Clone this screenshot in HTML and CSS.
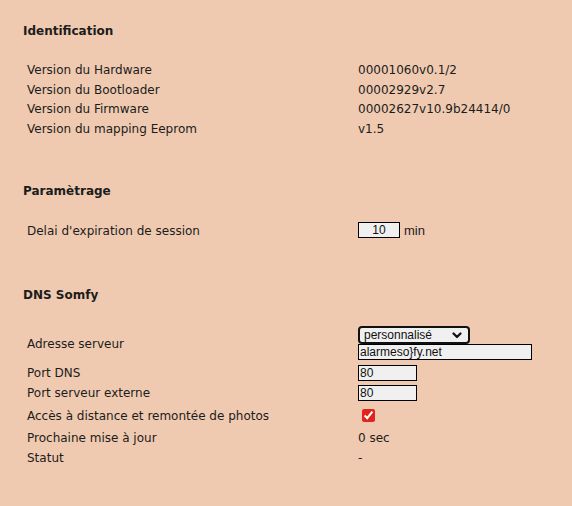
FILE: index.html
```html
<!DOCTYPE html>
<html lang="fr">
<head>
<meta charset="utf-8">
<title>Configuration</title>
<link rel="stylesheet" href="styles.css">
</head>
<body>
<main class="page">
  <section class="section">
    <h2 class="section-title">Identification</h2>
    <div class="rows rows-id">
      <div class="row row-text"><span class="label">Version du Hardware</span><span class="value">00001060v0.1/2</span></div>
      <div class="row row-text"><span class="label">Version du Bootloader</span><span class="value">00002929v2.7</span></div>
      <div class="row row-text"><span class="label">Version du Firmware</span><span class="value">00002627v10.9b24414/0</span></div>
      <div class="row row-text"><span class="label">Version du mapping Eeprom</span><span class="value">v1.5</span></div>
    </div>
  </section>

  <section class="section section-param">
    <h2 class="section-title">Paramètrage</h2>
    <div class="rows rows-param">
      <div class="row row-field"><span class="label">Delai d'expiration de session</span><span class="value"><input class="field field-timeout" type="text" value="10"><span class="unit">min</span></span></div>
    </div>
  </section>

  <section class="section section-dns">
    <h2 class="section-title">DNS Somfy</h2>
    <div class="rows rows-dns">
      <div class="row row-server"><span class="label">Adresse serveur</span>
        <span class="value value-stack">
          <span class="select-wrap">
            <select class="select"><option>personnalisé</option></select>
            <svg class="chevron" width="10" height="7" viewBox="0 0 10 7"><polyline points="1.5,1.5 5,5 8.5,1.5" fill="none" stroke="#111" stroke-width="2.2" stroke-linecap="round" stroke-linejoin="round"/></svg>
          </span>
          <input class="field field-host" type="text" value="alarmeso}fy.net">
        </span>
      </div>
      <div class="row row-field row-port"><span class="label">Port DNS</span><span class="value"><input class="field field-port" type="text" value="80"></span></div>
      <div class="row row-field row-port"><span class="label">Port serveur externe</span><span class="value"><input class="field field-port" type="text" value="80"></span></div>
      <div class="row row-check"><span class="label">Accès à distance et remontée de photos</span><span class="value"><input class="check" type="checkbox" checked></span></div>
      <div class="row row-text row-next"><span class="label">Prochaine mise à jour</span><span class="value">0 sec</span></div>
      <div class="row row-text row-status"><span class="label">Statut</span><span class="value">-</span></div>
    </div>
  </section>
</main>
</body>
</html>
```

FILE: styles.css
```css
html, body {
  margin: 0;
  padding: 0;
}
body {
  width: 572px;
  height: 506px;
  background: #efcab0;
  color: #1c1c1c;
  font-family: "DejaVu Sans", Verdana, sans-serif;
  font-size: 12px;
  overflow: hidden;
}
.page {
  padding: 22px 0 0 23px;
}
.section-title {
  margin: 0;
  padding-top: 1px;
  font-size: 12px;
  font-weight: bold;
  line-height: 16px;
  height: 16px;
}
.section-param {
  margin-top: 44px;
}
.section-dns {
  margin-top: 46px;
}
.rows {
  display: flex;
  flex-direction: column;
  padding-left: 4px;
}
.rows-id {
  margin-top: 21px;
}
.rows-param {
  margin-top: 21px;
}
.rows-dns {
  margin-top: 23px;
}
.row {
  display: grid;
  grid-template-columns: 331px auto;
  align-items: center;
  line-height: 15px;
}
.label {
  padding-top: 2px;
}
.row-text .value {
  padding-top: 2px;
}
.rows-id .row-text {
  height: 19.5px;
}
.row-field {
  height: 20px;
}
.row-port {
  height: 16px;
  margin-top: 4px;
}
.row-check {
  height: 22px;
  margin-top: 4px;
}
.row-next {
  height: 20px;
  margin-top: 1px;
}
.row-status {
  height: 20px;
}
.value {
  display: flex;
  align-items: center;
}
.value-stack {
  flex-direction: column;
  align-items: flex-start;
}
.field {
  box-sizing: border-box;
  height: 16px;
  margin: 0;
  padding: 0 1px;
  border: 1px solid #000;
  border-radius: 0;
  background: #f0f0f0;
  color: #111;
  font-family: "Liberation Sans", Arial, sans-serif;
  font-size: 12px;
  line-height: 14px;
  outline: none;
}
.field-timeout {
  width: 42px;
  text-align: center;
}
.unit {
  margin-left: 4px;
  font-family: "Liberation Sans", Arial, sans-serif;
  font-size: 13px;
}
.field-port {
  width: 59px;
}
.field-host {
  width: 174px;
}
.select-wrap {
  position: relative;
  display: block;
  width: 112px;
  height: 18px;
}
.select {
  -webkit-appearance: none;
  appearance: none;
  box-sizing: border-box;
  width: 112px;
  height: 18px;
  margin: 0;
  padding: 0 0 0 4px;
  border: 2px solid #111;
  border-radius: 4px;
  background: #f0f0f0;
  color: #111;
  font-family: "Liberation Sans", Arial, sans-serif;
  font-size: 12px;
  line-height: 14px;
}
.chevron {
  position: absolute;
  right: 8px;
  top: 6px;
  pointer-events: none;
}
.check {
  margin: 0 0 0 4px;
  width: 13px;
  height: 13px;
  accent-color: #e0261c;
}
```
